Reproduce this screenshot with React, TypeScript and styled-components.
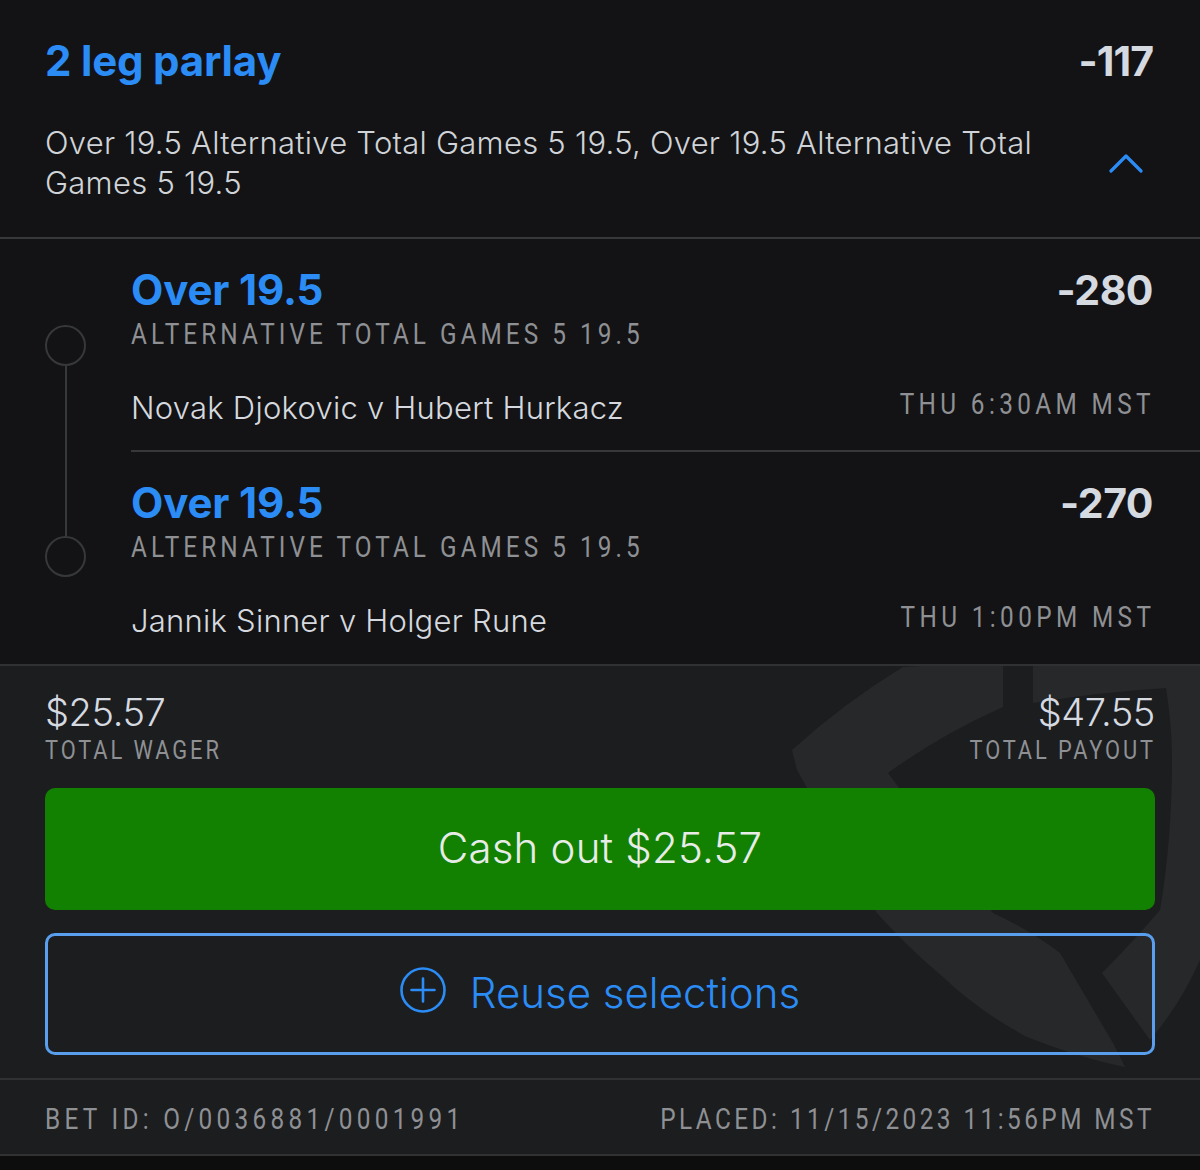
import React from "react";
import styled, { createGlobalStyle } from "styled-components";

type Leg = {
  pick: string;
  odds: string;
  market: string;
  teams: string;
  time: string;
};

const legs: Leg[] = [
  {
    pick: "Over 19.5",
    odds: "-280",
    market: "ALTERNATIVE TOTAL GAMES 5 19.5",
    teams: "Novak Djokovic v Hubert Hurkacz",
    time: "THU 6:30AM MST",
  },
  {
    pick: "Over 19.5",
    odds: "-270",
    market: "ALTERNATIVE TOTAL GAMES 5 19.5",
    teams: "Jannik Sinner v Holger Rune",
    time: "THU 1:00PM MST",
  },
];

const GlobalStyle = createGlobalStyle`
  html, body {
    margin: 0;
    background: #0d0d0e;
  }
  * {
    box-sizing: border-box;
  }
`;

const Page = styled.div`
  width: 1200px;
  height: 1170px;
  overflow: hidden;
  background: #0d0d0e;
  font-family: "Inter", "Liberation Sans", sans-serif;
  color: #d5d9e0;
`;

const Header = styled.header`
  height: 239px;
  padding: 36px 47px 0 45px;
  background: #131315;
  border-bottom: 2px solid #37383a;
`;

const HeaderTop = styled.div`
  display: flex;
  justify-content: space-between;
  align-items: center;
  height: 50px;
`;

const Title = styled.h1`
  margin: 0;
  font-size: 42px;
  line-height: 50px;
  font-weight: 700;
  letter-spacing: -0.2px;
  color: #2b8cf5;
`;

const TotalOdds = styled.div`
  font-size: 41px;
  line-height: 50px;
  font-weight: 700;
  letter-spacing: -1px;
  color: #d5d9e0;
`;

const Summary = styled.div`
  display: flex;
  justify-content: space-between;
  align-items: center;
  margin-top: 37px;
`;

const SummaryText = styled.p`
  margin: 0;
  width: 1010px;
  font-size: 31px;
  line-height: 40px;
  font-weight: 300;
  letter-spacing: 0.26px;
  color: #d0d3d8;
`;

const Chevron = styled.svg`
  width: 34px;
  height: 20px;
  margin-right: 10px;
  flex: none;
`;

const Legs = styled.section`
  display: grid;
  grid-template-columns: 131px 1fr;
  height: 425px;
  background: #131315;
`;

const Rail = styled.div`
  display: flex;
  flex-direction: column;
  align-items: center;
  width: 131px;
  padding: 86px 0 87px;
`;

const RailDot = styled.div`
  width: 41px;
  height: 41px;
  flex: none;
  border-radius: 50%;
  border: 2px solid #37383a;
`;

const RailLine = styled.div`
  width: 2px;
  flex: 1;
  background: #37383a;
`;

const LegList = styled.div`
  display: flex;
  flex-direction: column;
`;

const LegRow = styled.article<{ $divided?: boolean }>`
  height: ${({ $divided }) => ($divided ? "213px" : "212px")};
  padding: 26px 47px 0 0;
  border-bottom: ${({ $divided }) => ($divided ? "2px solid #37383a" : "none")};
`;

const LegLine = styled.div`
  display: flex;
  justify-content: space-between;
  align-items: center;
`;

const Pick = styled.div`
  font-size: 42px;
  line-height: 50px;
  font-weight: 700;
  letter-spacing: -0.15px;
  color: #2b8cf5;
`;

const LegOdds = styled.div`
  font-size: 41px;
  line-height: 50px;
  font-weight: 700;
  letter-spacing: -0.5px;
  color: #d5d9e0;
`;

// the small caps labels are a condensed face, Roboto squeezed comes closest
const Caption = styled.div<{ $right?: boolean; $tracking: number }>`
  margin-right: ${({ $right }) => ($right ? "-2px" : "0")};
  font-family: "Roboto", "Liberation Sans", sans-serif;
  font-size: 29px;
  line-height: 36px;
  letter-spacing: ${({ $tracking }) => $tracking}px;
  white-space: nowrap;
  transform: scaleX(0.84);
  transform-origin: ${({ $right }) => ($right ? "right" : "left")} center;
  color: #8e9094;
`;

const Market = styled(Caption)`
  margin-top: 1px;
`;

const Teams = styled.div`
  margin-top: 36px;
  font-size: 31px;
  line-height: 40px;
  font-weight: 300;
  letter-spacing: 0.24px;
  color: #d5d9df;
`;

const Kickoff = styled(Caption)`
  margin-top: 28px;
`;

const Footer = styled.section`
  position: relative;
  height: 492px;
  background: #1c1d1f;
  border-top: 2px solid #303133;
  border-bottom: 2px solid #303133;
  overflow: hidden;
`;

const Watermark = styled.svg`
  position: absolute;
  left: 0;
  top: -2px;
  width: 1200px;
  height: 492px;
`;

const FooterBody = styled.div`
  position: relative;
  height: 414px;
  padding: 23px 45px 0;
  border-bottom: 2px solid #303133;
`;

const Totals = styled.div`
  display: flex;
  justify-content: space-between;
`;

const TotalBlock = styled.div<{ $right?: boolean }>`
  display: flex;
  flex-direction: column;
  height: 75px;
  align-items: ${({ $right }) => ($right ? "flex-end" : "flex-start")};
`;

const Amount = styled.div`
  font-size: 38px;
  line-height: 46px;
  font-weight: 300;
  letter-spacing: -0.4px;
  color: #d5d9e0;
`;

const AmountLabel = styled(Caption)`
  font-size: 26px;
  line-height: 30px;
  margin-right: ${({ $right }) => ($right ? "-1px" : "0")};
`;

const CashOut = styled.button`
  display: block;
  width: 100%;
  height: 122px;
  margin-top: 24px;
  padding-bottom: 4px;
  border: none;
  border-radius: 10px;
  background: #128000;
  color: #e8ece8;
  font-family: inherit;
  font-size: 42px;
  font-weight: 300;
  letter-spacing: 0.2px;
`;

const Reuse = styled.button`
  display: flex;
  justify-content: center;
  align-items: center;
  gap: 24px;
  width: 100%;
  height: 122px;
  margin-top: 23px;
  padding-bottom: 4px;
  border: 3px solid #5a9fee;
  border-radius: 10px;
  background: transparent;
  color: #2b8cf5;
  font-family: inherit;
  font-size: 42px;
  font-weight: 300;
`;

const PlusIcon = styled.svg`
  width: 46px;
  height: 46px;
  margin-top: -6px;
  flex: none;
`;

const BetMeta = styled.div`
  position: relative;
  display: flex;
  justify-content: space-between;
  align-items: center;
  height: 74px;
  padding: 3px 47px 0 45px;
`;

const App = () => {
  return (
    <Page>
      <GlobalStyle />
      <Header>
        <HeaderTop>
          <Title>2 leg parlay</Title>
          <TotalOdds>-117</TotalOdds>
        </HeaderTop>
        <Summary>
          <SummaryText>
            Over 19.5 Alternative Total Games 5 19.5, Over 19.5 Alternative
            Total Games 5 19.5
          </SummaryText>
          <Chevron viewBox="0 0 34 20" fill="none">
            <path
              d="M2 18 L17 3 L32 18"
              stroke="#2b8cf5"
              strokeWidth="3.2"
              strokeLinecap="round"
              strokeLinejoin="round"
            />
          </Chevron>
        </Summary>
      </Header>
      <Legs>
        <Rail>
          <RailDot />
          <RailLine />
          <RailDot />
        </Rail>
        <LegList>
          {legs.map((leg, i) => (
            <LegRow key={leg.teams} $divided={i === 0}>
              <LegLine>
                <Pick>{leg.pick}</Pick>
                <LegOdds>{leg.odds}</LegOdds>
              </LegLine>
              <Market $tracking={4.8}>{leg.market}</Market>
              <LegLine>
                <Teams>{leg.teams}</Teams>
                <Kickoff $right $tracking={5.2}>
                  {leg.time}
                </Kickoff>
              </LegLine>
            </LegRow>
          ))}
        </LegList>
      </Legs>
      <Footer>
        <Watermark viewBox="0 664 1200 492" fill="#27282a">
          <path d="M903 667 Q955 664 1003 664 L1003 707 Q940 735 888 773 L993 913 Q1030 930 1060 953 L1113 1043 L1125 1067 Q1080 1058 1027 1037 Q980 1012 943 977 Q905 945 877 913 L797 770 L792 750 Q845 702 903 667 Z" />
          <path d="M1033 664 L1033 703 Q1100 692 1166 688 Q1172 725 1172 760 Q1172 840 1160 910 Q1130 945 1102 973 L1150 1040 Q1180 1005 1200 960 L1200 664 Z" />
        </Watermark>
        <FooterBody>
          <Totals>
            <TotalBlock>
              <Amount>$25.57</Amount>
              <AmountLabel $tracking={3.45}>TOTAL WAGER</AmountLabel>
            </TotalBlock>
            <TotalBlock $right>
              <Amount>$47.55</Amount>
              <AmountLabel $right $tracking={3.45}>
                TOTAL PAYOUT
              </AmountLabel>
            </TotalBlock>
          </Totals>
          <CashOut>Cash out $25.57</CashOut>
          <Reuse>
            <PlusIcon viewBox="0 0 46 46" fill="none" stroke="#2b8cf5" strokeWidth="2.6">
              <circle cx="23" cy="23" r="21.5" />
              <path d="M23 11.5 V34.5 M11.5 23 H34.5" strokeLinecap="round" />
            </PlusIcon>
            Reuse selections
          </Reuse>
        </FooterBody>
        <BetMeta>
          <Caption $tracking={5.1}>BET ID: O/0036881/0001991</Caption>
          <Caption $right $tracking={4.1}>
            PLACED: 11/15/2023 11:56PM MST
          </Caption>
        </BetMeta>
      </Footer>
    </Page>
  );
};

export default App;
